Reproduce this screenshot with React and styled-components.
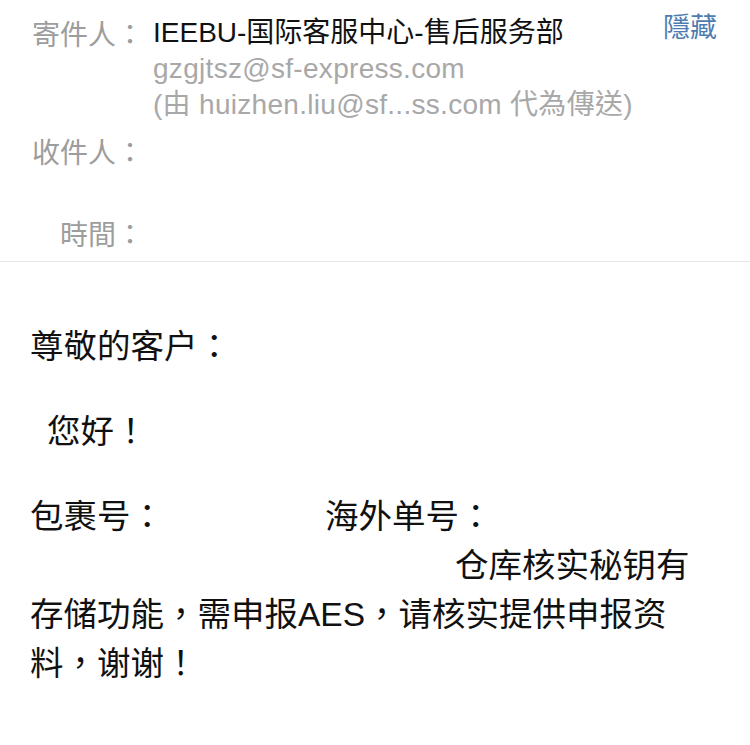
import React from "react";
import styled, { createGlobalStyle } from "styled-components";

const GlobalStyle = createGlobalStyle`
  html, body {
    margin: 0;
    padding: 0;
    background: #ffffff;
  }
  body {
    font-family: "Liberation Sans", "Noto Sans CJK TC", sans-serif;
    text-spacing-trim: space-all;
    -webkit-font-smoothing: antialiased;
  }
`;

const headerRows = [
  {
    label: "寄件人：",
    lines: [
      { text: "IEEBU-国际客服中心-售后服务部", tone: "name" },
      { text: "gzgjtsz@sf-express.com", tone: "mail" },
      { text: "(由 huizhen.liu@sf...ss.com 代為傳送)", tone: "mail" },
    ],
    action: "隱藏",
  },
  { label: "收件人：", lines: [{ text: "", tone: "mail" }, { text: "", tone: "mail" }] },
  { label: "時間：", lines: [{ text: "", tone: "mail" }] },
];

const App = () => {
  return (
    <>
      <GlobalStyle />
      <Page lang="zh-Hant">
        <Header>
          {headerRows.map((row) => (
            <HeaderRow key={row.label}>
              <Label>{row.label}</Label>
              <Values>
                {row.lines.map((line, i) => (
                  <Value key={i} tone={line.tone}>
                    {line.text || "\u00a0"}
                  </Value>
                ))}
              </Values>
              {row.action && <HideLink>{row.action}</HideLink>}
            </HeaderRow>
          ))}
        </Header>

        <Body>
          <Paragraph>
            <Line>尊敬的客户：</Line>
          </Paragraph>
          <Paragraph indent>
            <Line>您好！</Line>
          </Paragraph>
          <Paragraph>
            <Line>
              包裹号：<Redacted width={161} />海外单号：
            </Line>
            <Line>
              <Redacted width={425} />仓库核实秘钥有
            </Line>
            <Line>存储功能，需申报AES，请核实提供申报资</Line>
            <Line>料，谢谢！</Line>
          </Paragraph>
        </Body>
      </Page>
    </>
  );
};

const Page = styled.div`
  width: 750px;
  min-height: 745px;
  background: #ffffff;
`;

const Header = styled.div`
  display: flex;
  flex-direction: column;
  gap: 10px;
  padding: 15px 33px 10px 0;
  border-bottom: 1px solid #e6e6e6;
`;

const HeaderRow = styled.div`
  display: flex;
  align-items: flex-start;
`;

const Label = styled.div`
  width: 144px;
  flex-shrink: 0;
  text-align: right;
  font-family: "Noto Sans CJK TC", sans-serif;
  font-size: 28px;
  line-height: 36px;
  color: #9d9d9d;
`;

const Values = styled.div`
  flex: 1;
  display: flex;
  flex-direction: column;
  padding-left: 9px;
`;

const Value = styled.div`
  font-family: "Liberation Sans", "Noto Sans CJK TC", sans-serif;
  font-size: 28px;
  line-height: 36px;
  white-space: nowrap;
  color: ${(p) => (p.tone === "name" ? "#111111" : "#a8a8a8")};
  letter-spacing: ${(p) => (p.tone === "name" ? "0" : "0.3px")};
`;

const HideLink = styled.div`
  font-family: "Noto Sans CJK TC", sans-serif;
  font-size: 27px;
  line-height: 26px;
  margin-top: -2px;
  color: #4f7cb0;
`;

const Body = styled.div`
  display: flex;
  flex-direction: column;
  gap: 36px;
  padding: 60px 30px 40px 30px;
`;

const Paragraph = styled.div`
  display: flex;
  flex-direction: column;
  padding-left: ${(p) => (p.indent ? "17px" : "0")};
`;

const Line = styled.div`
  font-family: "Liberation Sans", "Noto Sans CJK TC", sans-serif;
  font-size: 33.5px;
  line-height: 49px;
  color: #111111;
  white-space: nowrap;
`;

const Redacted = styled.span`
  display: inline-block;
  width: ${(p) => p.width}px;
  height: 1px;
`;

export default App;
